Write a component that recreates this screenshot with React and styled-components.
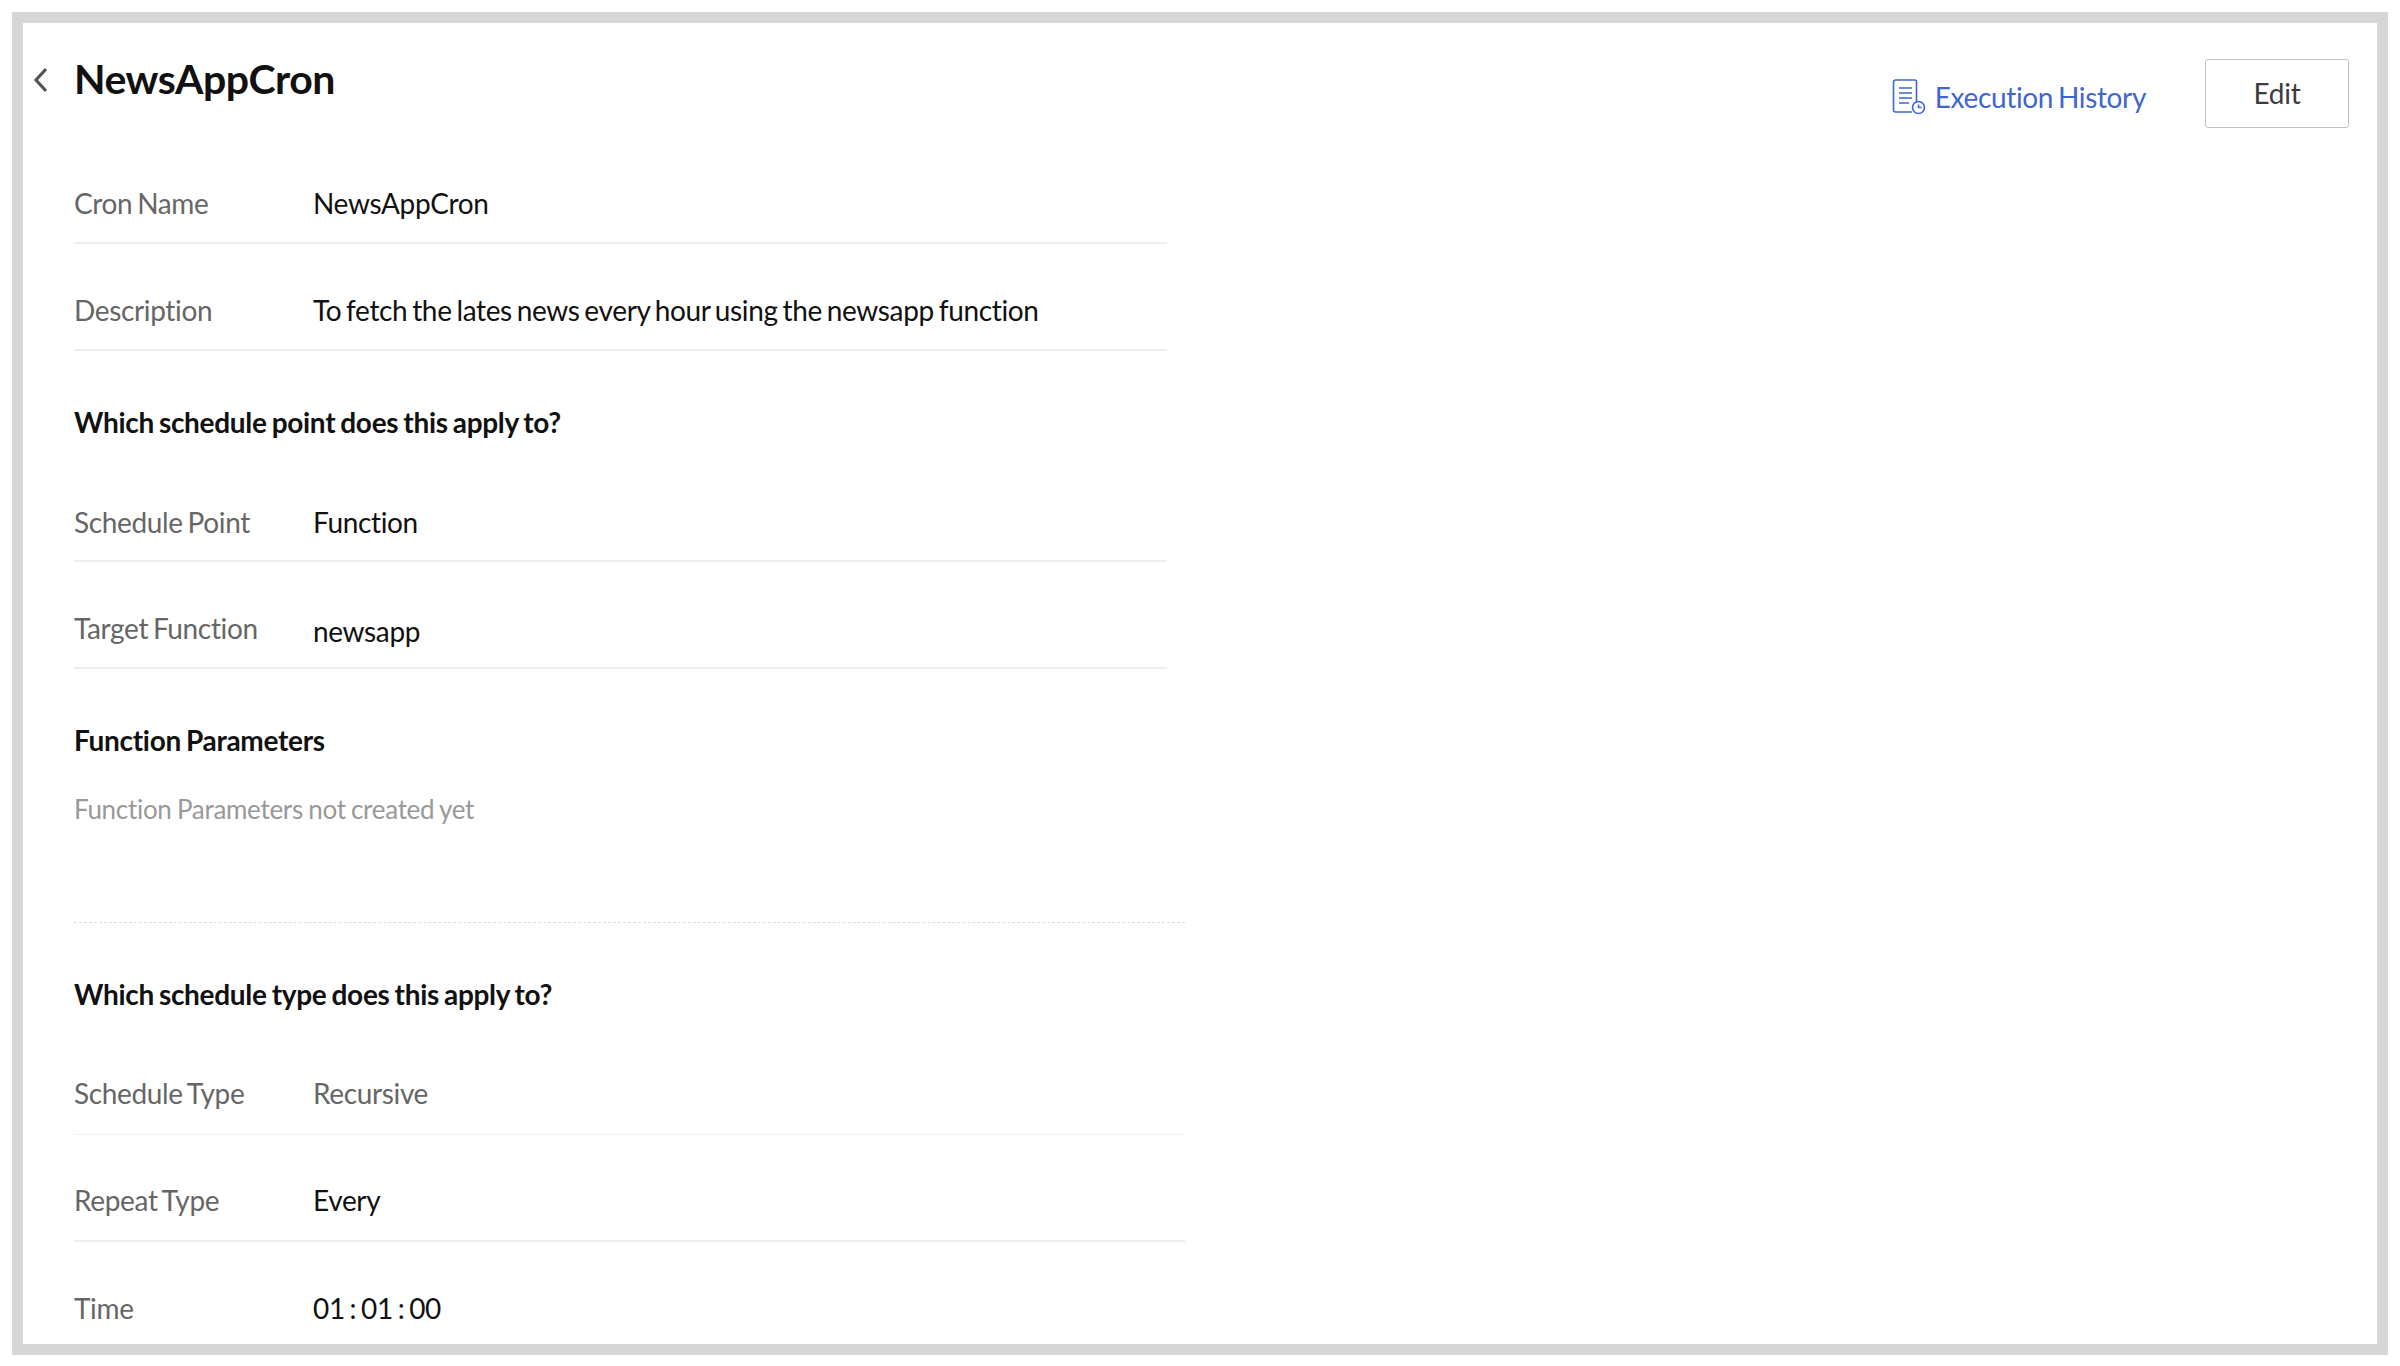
import React from "react";
import styled, { createGlobalStyle } from "styled-components";

const Global = createGlobalStyle`
  html, body { margin: 0; padding: 0; background: #fff; }
  body { font-family: Lato, "Liberation Sans", sans-serif; letter-spacing: -0.35px; word-spacing: -2px; }
`;
const Frame = styled.div`
  box-sizing: border-box;
  margin: 12px 0 0 12px;
  width: 2376px;
  height: 1343px;
  border: 11px solid #d6d6d6;
  background: #fff;
  overflow: hidden;
  display: flex;
  flex-direction: column;
  padding: 0 28px 0 51px;
`;
const Header = styled.header`
  flex: none;
  display: flex;
  justify-content: space-between;
  align-items: flex-start;
  height: 114px;
  position: relative;
`;
const Back = styled.svg`
  position: absolute;
  left: -41px;
  top: 44px;
  width: 16px;
  height: 26px;
`;
const Title = styled.h1`
  margin: 0;
  padding-top: 30px;
  font-size: 41px;
  line-height: 52px;
  letter-spacing: -0.5px;
  font-weight: 700;
  color: #111;
`;
const Actions = styled.div`
  display: flex;
  align-items: flex-start;
  gap: 59px;
  padding-top: 36px;
`;
const HistoryLink = styled.a`
  display: flex;
  align-items: center;
  gap: 9px;
  margin-top: 19px;
  font-size: 28px;
  line-height: 38px;
  color: #3f66d0;
`;
const EditButton = styled.button`
  box-sizing: border-box;
  width: 144px;
  height: 69px;
  background: #fff;
  border: 1px solid #c2c2c2;
  border-radius: 3px;
  font: 400 28px Lato, sans-serif;
  letter-spacing: -0.2px;
  color: #3c3c3c;
  padding: 0 0 1px;
`;
const Section = styled.section`
  flex: none;
  width: ${(p) => p.$width}px;
`;
const Row = styled.div`
  box-sizing: border-box;
  display: flex;
  align-items: center;
  height: ${(p) => p.$height || 107}px;
  border-bottom: ${(p) => (p.$last ? "none" : `${p.$thin ? 1 : 2}px solid ${p.$thin ? "#f0f0f0" : "#eeeeee"}`)};
  padding-top: ${(p) => p.$top || 26}px;
  font-size: 28px;
  line-height: 38px;
`;
const Label = styled.span`
  width: 239px;
  flex: none;
  color: #666;
`;
const Value = styled.span`
  color: ${(p) => (p.$muted ? "#666" : "#111")};
  position: relative;
  top: ${(p) => p.$shift || 0}px;
`;
const Heading = styled.h2`
  margin: 0;
  font-size: 28px;
  line-height: 38px;
  font-weight: 700;
  letter-spacing: -0.3px;
  word-spacing: -1.5px;
  color: #111;
  padding-top: ${(p) => p.$top}px;
`;
const Note = styled.p`
  margin: 0;
  padding-top: 31px;
  height: 132px;
  font-size: 26px;
  line-height: 38px;
  letter-spacing: -0.3px;
  word-spacing: -1px;
  color: #999;
`;
const Dotted = styled.div`
  flex: none;
  width: 1111px;
  border-top: 1px dashed #ddd;
`;

export default function App() {
  return (
    <>
      <Global />
      <Frame>
        <Header>
          <Back viewBox="0 0 16 26" fill="none" stroke="#555" strokeWidth="3.2">
            <path d="M13 2 3 13l10 11" />
          </Back>
          <Title>NewsAppCron</Title>
          <Actions>
            <HistoryLink>
              <svg width="34" height="36" viewBox="0 0 34 36" fill="none" stroke="#3f66d0" strokeWidth="1.6">
                <path d="M20 33H3.5a2 2 0 0 1-2-2V3a2 2 0 0 1 2-2h19a2 2 0 0 1 2 2v20" />
                <path d="M7 9h13M7 14h13M7 19h13M7 24h10" />
                <circle cx="26.5" cy="28.5" r="6" />
                <path d="M26.5 25.5v3h3" />
              </svg>
              Execution History
            </HistoryLink>
            <EditButton>Edit</EditButton>
          </Actions>
        </Header>
        <Section $width={1093}>
          <Row><Label>Cron Name</Label><Value>NewsAppCron</Value></Row>
          <Row><Label>Description</Label><Value>To fetch the lates news every hour using the newsapp function</Value></Row>
          <Heading $top={52}>Which schedule point does this apply to?</Heading>
          <Row $height={121} $top={42}><Label>Schedule Point</Label><Value>Function</Value></Row>
          <Row><Label>Target Function</Label><Value $shift={3}>newsapp</Value></Row>
          <Heading $top={52}>Function Parameters</Heading>
          <Note>Function Parameters not created yet</Note>
        </Section>
        <Dotted />
        <Section $width={1111}>
          <Heading $top={52}>Which schedule type does this apply to?</Heading>
          <Row $height={122} $top={38} $thin><Label>Schedule Type</Label><Value $muted>Recursive</Value></Row>
          <Row $top={25}><Label>Repeat Type</Label><Value>Every</Value></Row>
          <Row $last $top={24}><Label>Time</Label><Value>01 : 01 : 00</Value></Row>
        </Section>
      </Frame>
    </>
  );
}
